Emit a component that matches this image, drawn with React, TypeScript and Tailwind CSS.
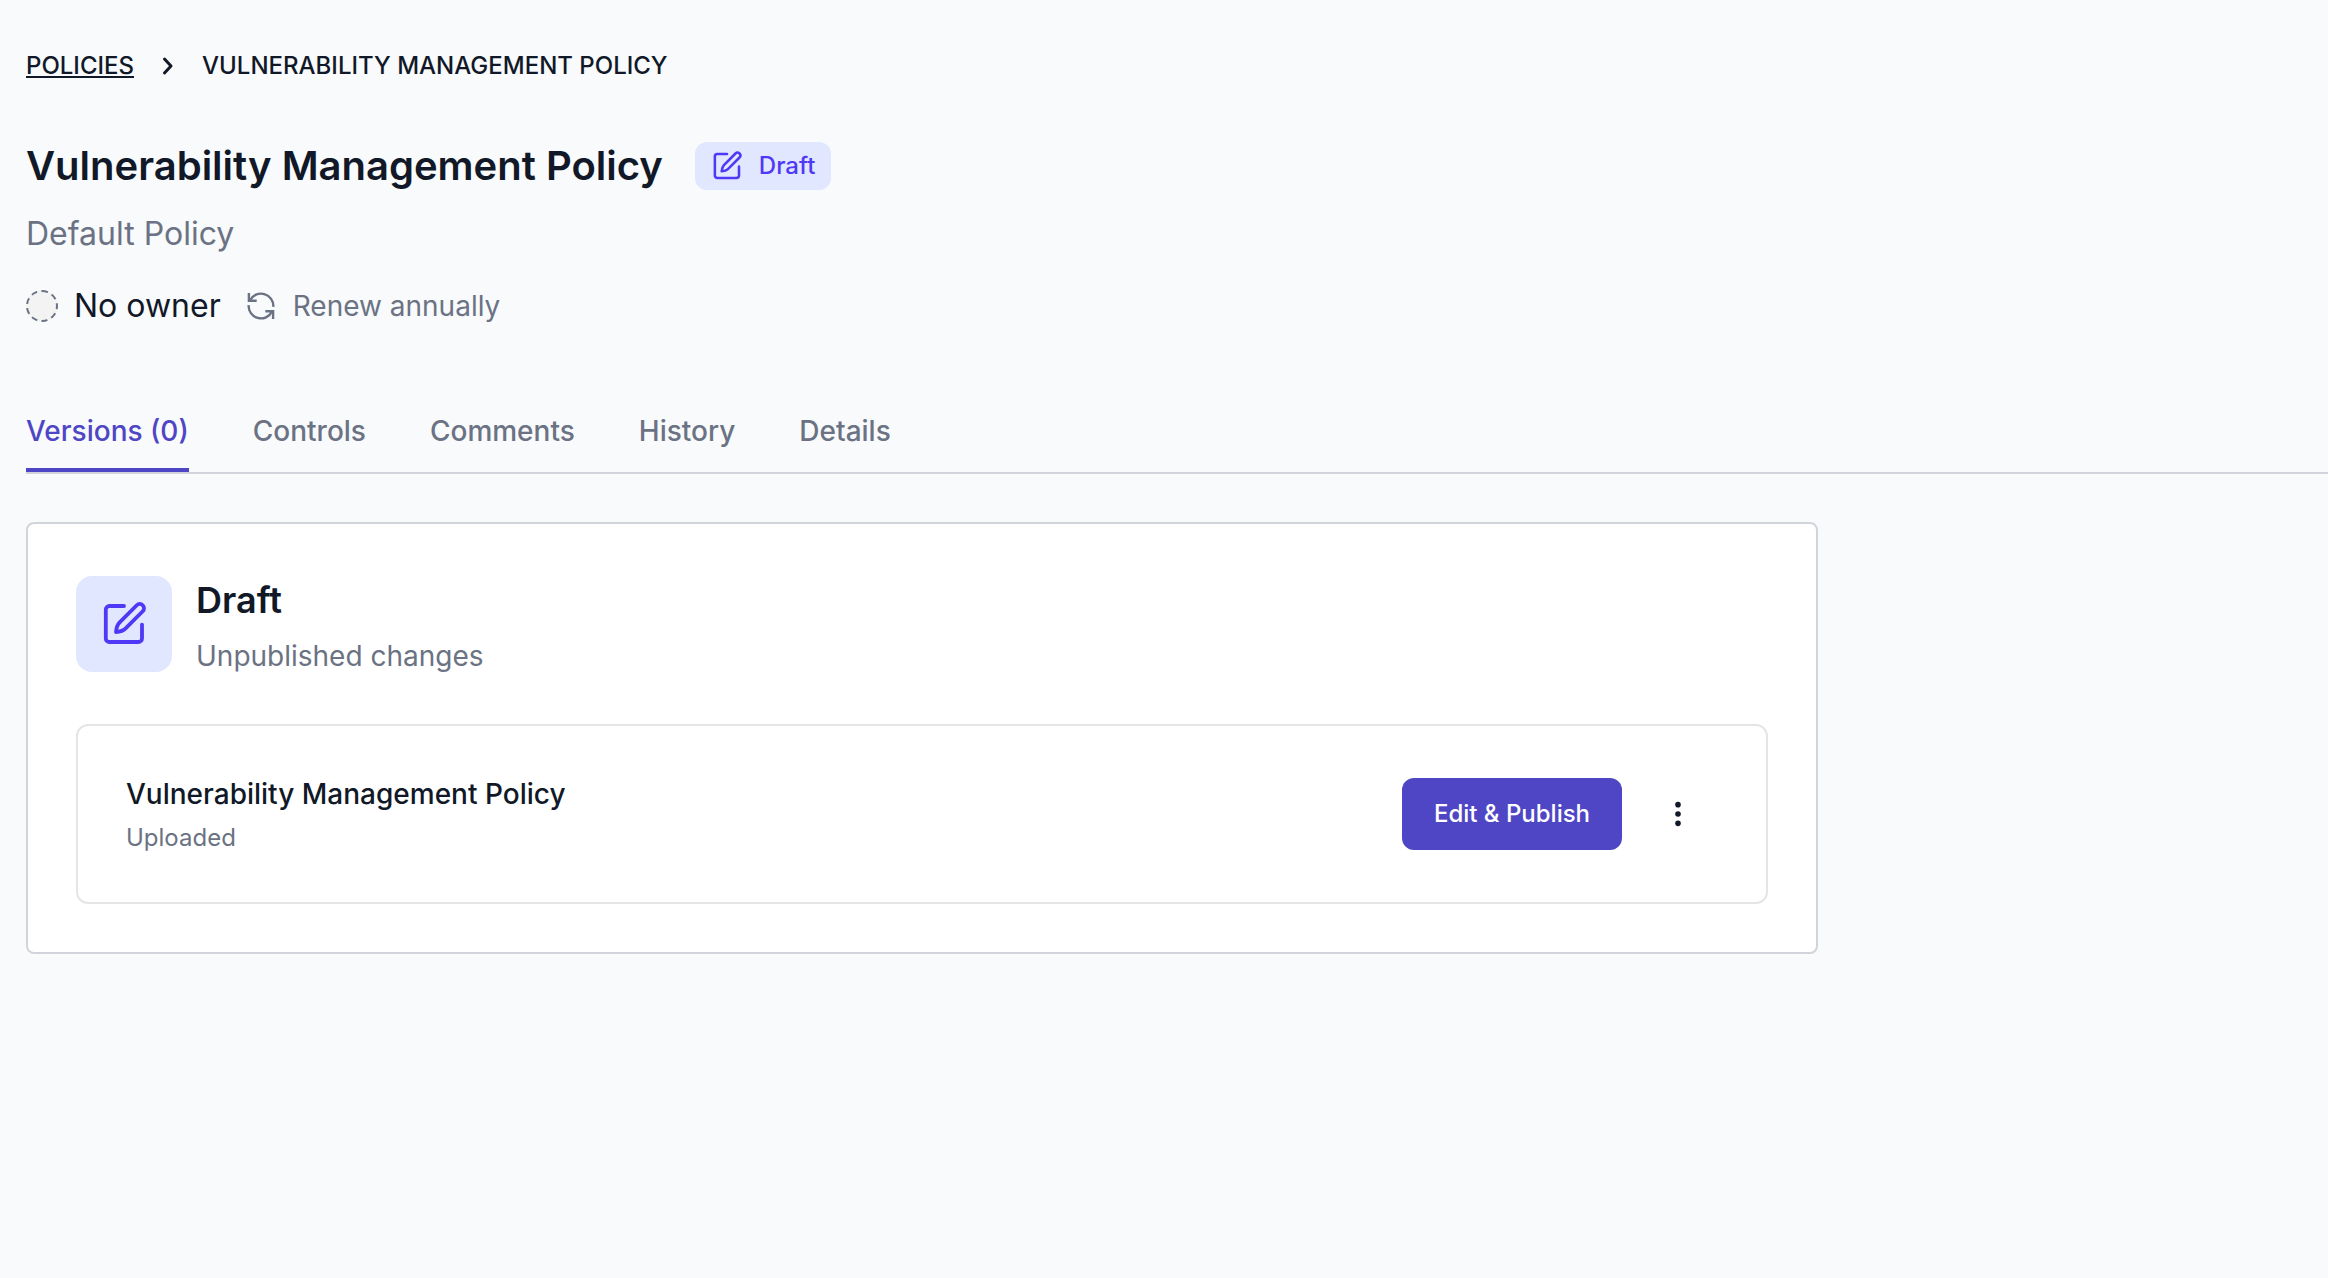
const tabs = ["Versions (0)", "Controls", "Comments", "History", "Details"];

const EditIcon = ({ className }: { className?: string }) => (
  <svg className={className} viewBox="0 0 24 24" fill="none" stroke="currentColor" strokeWidth="1.900" strokeLinecap="round" strokeLinejoin="round">
    <path d="M12 3H4.700A1.800 1.800 0 0 0 2.900 4.800V19.200A1.800 1.800 0 0 0 4.700 21H19.200A1.800 1.800 0 0 0 21 19.200V12.300" />
    <path d="M18.375 2.625a2.120 2.120 0 0 1 3 3L12.700 14.300C11.800 15.200 10.200 15.800 8 16C8.200 13.800 8.800 12.200 9.700 11.300Z" />
  </svg>
);

const RenewIcon = ({ className }: { className?: string }) => (
  <svg className={className} viewBox="0 0 28 28" fill="none" stroke="currentColor" strokeWidth="2.400">
    <path d="M1.900 1v7.700H9.700" />
    <path d="M3 8.500A12.300 12.300 0 0 1 26.300 14.900" />
    <path d="M26.100 27v-7.700H18.300" />
    <path d="M25 19.500A12.300 12.300 0 0 1 1.700 13.100" />
  </svg>
);

const Breadcrumbs = () => (
  <nav className="flex h-9 items-center text-2xl/9 font-medium uppercase">
    <a className="underline" href="#">Policies</a>
    <svg className="mx-6 h-5 w-5" viewBox="0 0 20 20" fill="none" stroke="currentColor" strokeWidth="3" strokeLinecap="round" strokeLinejoin="round">
      <path d="m6.500 3 6.500 7-6.500 7" />
    </svg>
    <span>Vulnerability Management Policy</span>
  </nav>
);

const Header = () => (
  <header className="mt-[58px]">
    <div className="flex h-12 items-center">
      <h1 className="text-[40px]/12 font-semibold">Vulnerability Management Policy</h1>
      <span className="ml-8 flex h-12 items-center gap-4 rounded-xl bg-indigo-100 px-4 text-2xl font-medium text-[#4f39f6]">
        <EditIcon className="h-8 w-8" />
        Draft
      </span>
    </div>
    <p className="mt-6 text-[32px]/10 text-[#6b7283]">Default Policy</p>
    <div className="mt-8 flex h-10 items-center">
      <div className="h-8 w-8 rounded-full border-2 border-dashed border-[#6b7283] bg-[#f3f3f3]" />
      <span className="ml-4 text-[32px]/10">No owner</span>
      <RenewIcon className="ml-[26px] h-7 w-7 text-[#6b7283]" />
      <span className="ml-[18px] text-[28px]/10 text-[#6b7283]">Renew annually</span>
    </div>
  </header>
);

const Tabs = () => (
  <div className="mt-[68px] flex h-20 gap-16 border-b-2 border-[#d1d5db] text-[28px]/10 font-medium text-[#6b7283]">
    {tabs.map((tab, i) => (
      <button key={tab} className={i === 0 ? "border-b-4 border-[#4f46c5] text-[#4f46c5]" : "border-b-4 border-transparent"}>
        {tab}
      </button>
    ))}
  </div>
);

const DraftCard = () => (
  <section className="mt-12 h-[432px] w-[1792px] rounded-lg border-2 border-[#d1d5db] bg-white px-12 pt-[52px]">
    <div className="flex h-24 gap-6">
      <div className="flex h-24 w-24 items-center justify-center rounded-2xl bg-indigo-100 text-[#4f39f6]">
        <EditIcon className="h-12 w-12" />
      </div>
      <div>
        <h2 className="text-4xl/12 font-semibold">Draft</h2>
        <p className="mt-3 text-[28px]/10 text-[#6b7283]">Unpublished changes</p>
      </div>
    </div>
    <div className="mt-[52px] flex h-[180px] items-center justify-between rounded-xl border-2 border-[#e5e5e5] px-12">
      <div className="pt-1">
        <h3 className="text-[28px]/10 font-medium">Vulnerability Management Policy</h3>
        <p className="mt-1 text-2xl/10 text-[#6b7283]">Uploaded</p>
      </div>
      <div className="flex items-center gap-4">
        <button className="h-[72px] w-[220px] rounded-xl bg-[#4f46c5] text-2xl font-medium text-white">Edit &amp; Publish</button>
        <button className="flex h-[72px] w-20 items-center justify-center">
          <svg className="h-8 w-8" viewBox="0 0 32 32" fill="currentColor">
            <circle cx="16" cy="6.667" r="2.800" />
            <circle cx="16" cy="16" r="2.800" />
            <circle cx="16" cy="25.333" r="2.800" />
          </svg>
        </button>
      </div>
    </div>
  </section>
);

export default function App() {
  return (
    <main className="min-h-screen bg-[#f8fafc] pt-12 pl-[26px] font-['Inter',sans-serif] text-[#111827]">
      <Breadcrumbs />
      <Header />
      <Tabs />
      <DraftCard />
    </main>
  );
}
